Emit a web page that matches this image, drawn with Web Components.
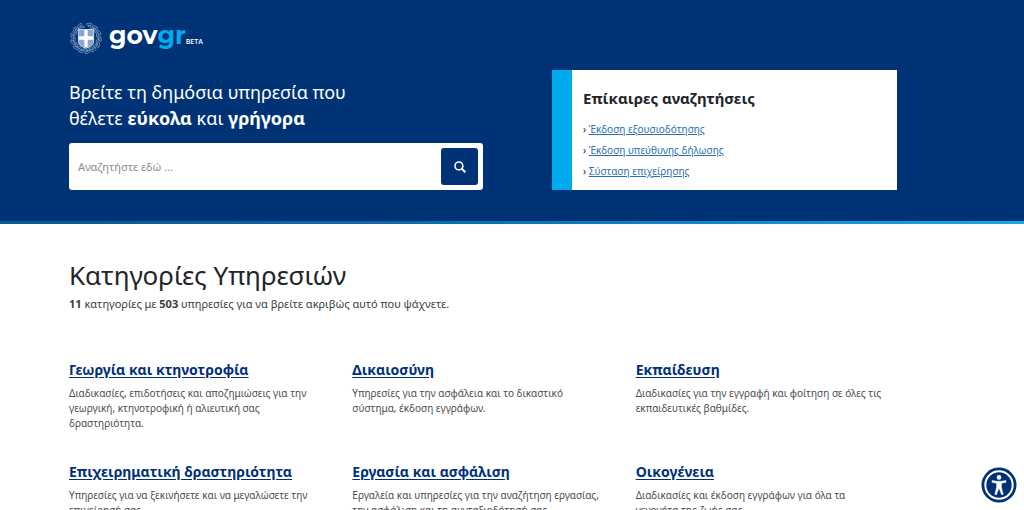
<!DOCTYPE html>
<html lang="el">
<head>
<meta charset="utf-8">
<meta name="viewport" content="width=device-width, initial-scale=1">
<title>gov.gr</title>
<style>
    :root {
        --navy: #003375;
        --cyan: #00abed;
        --ink: #222529;
        --text: #4b4d4f;
        --gutter-left: 69px;
        --gutter-right: 127px;
    }
    body {
        margin: 0;
        background: #fff;
        color: var(--text);
        font: 10px/15px "Noto Sans", "Open Sans", sans-serif;
    }
</style>
</head>
<body>
<gov-hero>
    <gov-logo slot="logo"></gov-logo>
    <gov-search slot="search">Βρείτε τη δημόσια υπηρεσία που<br>θέλετε <b>εύκολα</b> και <b>γρήγορα</b></gov-search>
    <gov-trending slot="aside" heading="Επίκαιρες αναζητήσεις">
        <gov-trend>Έκδοση εξουσιοδότησης</gov-trend>
        <gov-trend>Έκδοση υπεύθυνης δήλωσης</gov-trend>
        <gov-trend>Σύσταση επιχείρησης</gov-trend>
    </gov-trending>
</gov-hero>
<gov-categories heading="Κατηγορίες Υπηρεσιών">
    <span slot="summary"><b>11</b> κατηγορίες με <b>503</b> υπηρεσίες για να βρείτε ακριβώς αυτό που ψάχνετε.</span>
    <gov-category name="Γεωργία και κτηνοτροφία">Διαδικασίες, επιδοτήσεις και αποζημιώσεις για την γεωργική, κτηνοτροφική ή αλιευτική σας δραστηριότητα.</gov-category>
    <gov-category name="Δικαιοσύνη">Υπηρεσίες για την ασφάλεια και το δικαστικό σύστημα, έκδοση εγγράφων.</gov-category>
    <gov-category name="Εκπαίδευση">Διαδικασίες για την εγγραφή και φοίτηση σε όλες τις εκπαιδευτικές βαθμίδες.</gov-category>
    <gov-category name="Επιχειρηματική δραστηριότητα">Υπηρεσίες για να ξεκινήσετε και να μεγαλώσετε την επιχείρησή σας.</gov-category>
    <gov-category name="Εργασία και ασφάλιση">Εργαλεία και υπηρεσίες για την αναζήτηση εργασίας, την ασφάλιση και τη συνταξιοδότησή σας.</gov-category>
    <gov-category name="Οικογένεια">Διαδικασίες και έκδοση εγγράφων για όλα τα γεγονότα της ζωής σας.</gov-category>
</gov-categories>
<gov-accessibility></gov-accessibility>

<script>
class GovElement extends HTMLElement {
    constructor() {
        super();
        this.attachShadow({ mode: 'open' });
    }

    connectedCallback() {
        this.shadowRoot.innerHTML = this.render();
    }
}

/** Blue page header: logo on top, search and trending box side by side */
class GovHero extends GovElement {
    render() {
        return `
        <style>
            :host { display: block; background: var(--navy); color: #fff; }
            header { padding: 20px var(--gutter-right) 31px var(--gutter-left); }
            .grid { display: grid; grid-template-columns: 6fr 5fr; column-gap: 69px; align-items: end; }
            .left { display: flex; flex-direction: column; gap: 23px; }
            .line { height: 3px; background: linear-gradient(90deg, #075695, #0c6ead 45%, #1aa7e5); }
        </style>
        <header>
            <div class="grid">
                <div class="left">
                    <slot name="logo"></slot>
                    <slot name="search"></slot>
                </div>
                <slot name="aside"></slot>
            </div>
        </header>
        <div class="line"></div>
        `;
    }
}

class GovLogo extends GovElement {
    // ring of laurel leaves around the shield
    leaves() {
        let out = '';
        for (let i = 0; i < 13; i++) {
            const a = 20 + i * 26.6;
            out += `<g transform="rotate(${a} 20 20)">
                <ellipse cx="18" cy="3.6" rx="3.4" ry="1.3" transform="rotate(-24 18 3.6)" />
                <ellipse cx="20.5" cy="6.2" rx="3" ry="1" transform="rotate(20 20.5 6.2)" />
            </g>`;
        }
        return out;
    }

    render() {
        return `
        <style>
            :host { display: block; }
            a { display: flex; align-items: flex-start; gap: 6px; color: #fff; text-decoration: none; }
            svg { width: 34px; height: 36px; flex: none; }
            .word { display: flex; align-items: baseline; font: 700 25px/30px "Montserrat", Lato, sans-serif; }
            .gr { color: var(--cyan); }
            small { font: 600 7px/10px "Open Sans", "Noto Sans", sans-serif; }
        </style>
        <a href="#" aria-label="gov.gr">
            <svg viewBox="0 0 40 40" aria-hidden="true">
                <g fill="none" stroke="#8fa9cd" stroke-width="0.8">${this.leaves()}</g>
                <path d="M11 10h18v14c0 4-3 6-9 8c-6-2-9-4-9-8z" fill="#8ba5cc" stroke="#dce6f4" />
                <path d="M18 10.500h4v7.500h6.500v4h-6.500v8.500h-4v-8.500h-6.500v-4h6.500z" fill="#fff" />
            </svg>
            <span class="word"><span>gov</span><span class="gr">gr</span><small>BETA</small></span>
        </a>
        `;
    }
}

class GovSearch extends GovElement {
    render() {
        return `
        <style>
            :host { display: block; }
            label { display: block; font-size: 18px; line-height: 26px; }
            form { display: flex; margin-top: 12px; padding: 5px; background: #fff; border-radius: 3px; }
            input {
                flex: 1; min-width: 0; padding: 0 4px; border: 0; outline: 0;
                background: none; color: var(--ink); font: 11px/16px "Noto Sans", sans-serif;
            }
            input::placeholder { color: #868b90; opacity: 1; }
            button {
                display: grid; place-items: center; width: 37px; height: 37px; padding: 0;
                border: 0; border-radius: 3px; background: var(--navy); color: #fff;
            }
            svg { width: 12px; height: 12px; }
        </style>
        <label for="q"><slot></slot></label>
        <form role="search">
            <input id="q" type="text" placeholder="Αναζητήστε εδώ ...">
            <button type="button" aria-label="Αναζήτηση">
                <svg viewBox="0 0 12 12" fill="none" stroke="currentColor" aria-hidden="true">
                    <circle cx="4.900" cy="4.900" r="3.900" stroke-width="1.600" />
                    <path d="M7.800 7.800L11.300 11.300" stroke-width="2" />
                </svg>
            </button>
        </form>
        `;
    }
}

class GovTrending extends GovElement {
    render() {
        return `
        <style>
            :host { display: block; background: #fff; border-left: 20px solid var(--cyan); color: var(--ink); }
            section { padding: 17px 11px 8px; }
            h2 { margin: 0 0 10px; font-size: 15px; line-height: 22px; }
            ul { margin: 0; padding: 0; list-style: none; }
        </style>
        <section>
            <h2>${this.getAttribute('heading')}</h2>
            <ul role="list"><slot></slot></ul>
        </section>
        `;
    }
}

class GovTrend extends GovElement {
    connectedCallback() {
        this.setAttribute('role', 'listitem');
        super.connectedCallback();
    }

    render() {
        return `
        <style>
            :host { display: block; line-height: 21px; }
            a { color: #2b71b0; text-underline-offset: 1px; }
        </style>
        › <a href="#"><slot></slot></a>
        `;
    }
}

class GovCategories extends GovElement {
    render() {
        return `
        <style>
            :host { display: block; padding: 32px var(--gutter-right) 32px var(--gutter-left); }
            h1 { margin: 0; color: var(--ink); font-size: 26px; line-height: 38px; font-weight: 400; }
            p { margin: 0 0 45px; font-size: 11px; line-height: 20px; }
            ::slotted([slot=summary]) { color: #3a3d40; }
            .grid { display: grid; grid-template-columns: repeat(3, 1fr); gap: 30px 22px; }
        </style>
        <main>
            <h1>${this.getAttribute('heading')}</h1>
            <p><slot name="summary"></slot></p>
            <div class="grid"><slot></slot></div>
        </main>
        `;
    }
}

class GovCategory extends GovElement {
    render() {
        return `
        <style>
            :host { display: block; }
            h2 { margin: 0 0 5px; font-size: 14px; line-height: 22px; }
            a { color: #003078; text-underline-offset: 2px; }
            p { margin: 0; padding-right: 10px; }
        </style>
        <h2><a href="#">${this.getAttribute('name')}</a></h2>
        <p><slot></slot></p>
        `;
    }
}

/** Floating accessibility menu button */
class GovAccessibility extends GovElement {
    render() {
        return `
        <style>
            :host { position: fixed; right: 7px; bottom: 7px; }
            button { display: block; width: 36px; height: 36px; padding: 0; border: 0; background: none; }
            svg { display: block; width: 100%; height: 100%; }
        </style>
        <button type="button" aria-label="Προσβασιμότητα">
            <svg viewBox="0 0 36 36" aria-hidden="true">
                <circle cx="18" cy="18" r="17.500" fill="#003078" />
                <circle cx="18" cy="18" r="13.700" fill="none" stroke="#fff" stroke-width="2" />
                <circle cx="18" cy="10.400" r="2.300" fill="#fff" />
                <path d="M11 13.600l5 .7h4l5-.7v1.700l-4.600 1v4l1.800 7.200h-1.700l-2.500-6.600l-2.500 6.600h-1.700l1.800-7.200v-4l-4.600-1z" fill="#fff" stroke="#fff" stroke-width="0.500" stroke-linejoin="round" />
            </svg>
        </button>
        `;
    }
}

customElements.define('gov-hero', GovHero);
customElements.define('gov-logo', GovLogo);
customElements.define('gov-search', GovSearch);
customElements.define('gov-trending', GovTrending);
customElements.define('gov-trend', GovTrend);
customElements.define('gov-categories', GovCategories);
customElements.define('gov-category', GovCategory);
customElements.define('gov-accessibility', GovAccessibility);
</script>
</body>
</html>
